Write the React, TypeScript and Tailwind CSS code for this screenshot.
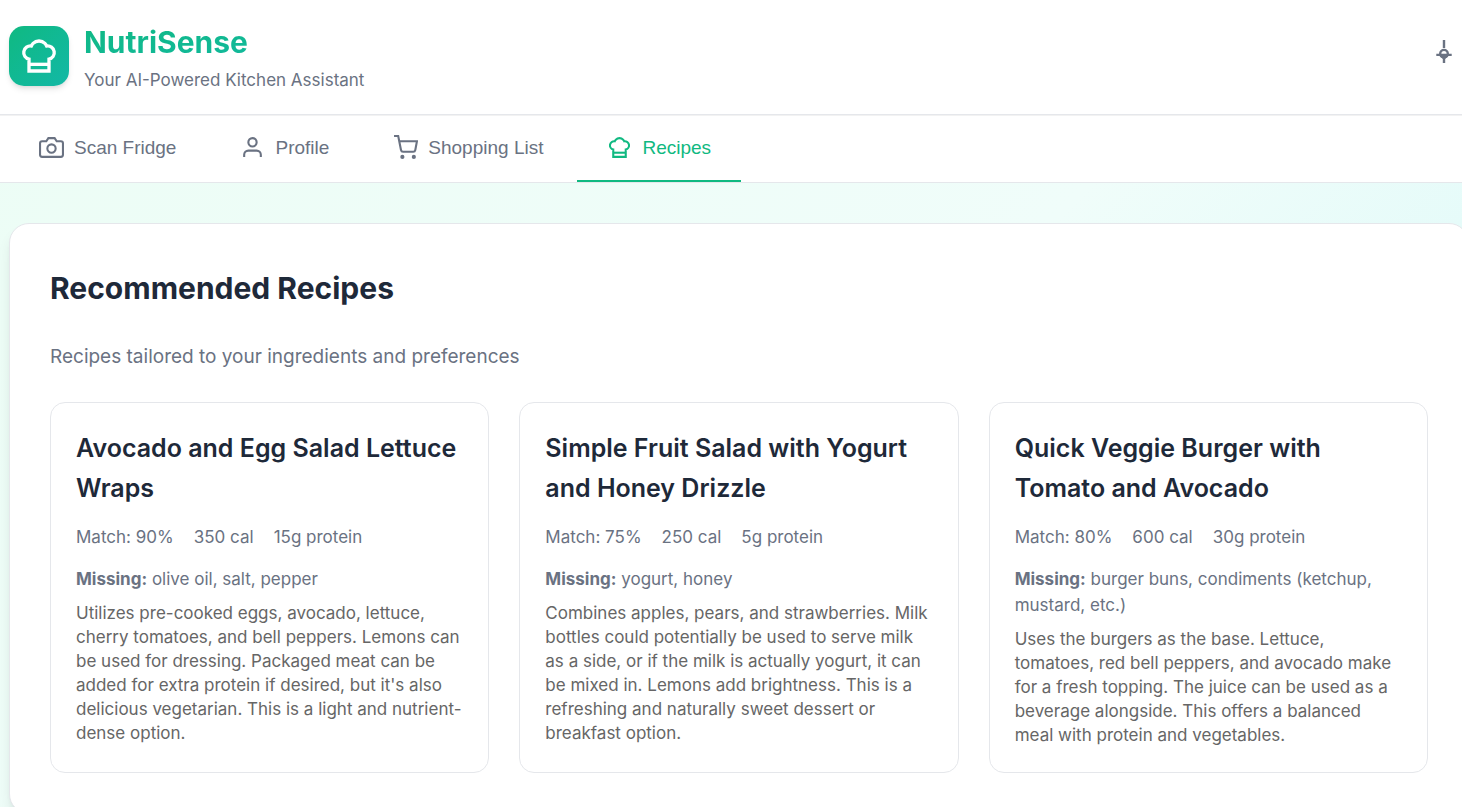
import React, { useState } from 'react';

type IconProps = { className?: string };

const ChefHatIcon = ({ className }: IconProps) => (
  <svg className={className} viewBox="0 0 24 24" fill="none" stroke="currentColor" strokeWidth="2" aria-hidden="true">
    <path d="M6 13.87A4 4 0 0 1 7.41 6a5.11 5.11 0 0 1 1.05-1.54 5 5 0 0 1 7.08 0A5.11 5.11 0 0 1 16.59 6 4 4 0 0 1 18 13.87V21H6Z" />
    <line x1="6" y1="17" x2="18" y2="17" />
  </svg>
);

const CameraIcon = ({ className }: IconProps) => (
  <svg className={className} viewBox="0 0 24 24" fill="none" stroke="currentColor" strokeWidth="2" aria-hidden="true">
    <path d="M23 19a2 2 0 0 1-2 2H3a2 2 0 0 1-2-2V8a2 2 0 0 1 2-2h4l2-3h6l2 3h4a2 2 0 0 1 2 2z" />
    <circle cx="12" cy="13" r="4" />
  </svg>
);

const UserIcon = ({ className }: IconProps) => (
  <svg className={className} viewBox="0 0 24 24" fill="none" stroke="currentColor" strokeWidth="2" aria-hidden="true">
    <path d="M20 21v-2a4 4 0 0 0-4-4H8a4 4 0 0 0-4 4v2" />
    <circle cx="12" cy="7" r="4" />
  </svg>
);

const CartIcon = ({ className }: IconProps) => (
  <svg className={className} viewBox="0 0 24 24" fill="none" stroke="currentColor" strokeWidth="2" aria-hidden="true">
    <circle cx="9" cy="21" r="1" />
    <circle cx="20" cy="21" r="1" />
    <path d="M1 1h4l2.68 13.39a2 2 0 0 0 2 1.61h9.72a2 2 0 0 0 2-1.61L23 6H6" />
  </svg>
);

const SettingsIcon = ({ className }: IconProps) => (
  <svg className={className} viewBox="0 0 24 24" fill="none" stroke="currentColor" strokeWidth="2.4" aria-hidden="true">
    <path d="M12 0v8M12 17v6M4.300 14.900h15.400" />
    <circle cx="12" cy="13.7" r="3.8" />
    <path d="M7 15h10l-4 4h-2z" fill="currentColor" stroke="none" />
  </svg>
);

const tabs = [
  { id: 'scan', label: 'Scan Fridge', icon: CameraIcon },
  { id: 'profile', label: 'Profile', icon: UserIcon },
  { id: 'shopping', label: 'Shopping List', icon: CartIcon },
  { id: 'recipes', label: 'Recipes', icon: ChefHatIcon },
];

const recipes = [
  {
    title: 'Avocado and Egg Salad Lettuce Wraps',
    match: 90,
    calories: 350,
    protein: 15,
    missing: ['olive oil', 'salt', 'pepper'],
    description:
      "Utilizes pre-cooked eggs, avocado, lettuce, cherry tomatoes, and bell peppers. Lemons can be used for dressing. Packaged meat can be added for extra protein if desired, but it's also delicious vegetarian. This is a light and nutrient-dense option.",
  },
  {
    title: 'Simple Fruit Salad with Yogurt and Honey Drizzle',
    match: 75,
    calories: 250,
    protein: 5,
    missing: ['yogurt', 'honey'],
    description:
      'Combines apples, pears, and strawberries. Milk bottles could potentially be used to serve milk as a side, or if the milk is actually yogurt, it can be mixed in. Lemons add brightness. This is a refreshing and naturally sweet dessert or breakfast option.',
  },
  {
    title: 'Quick Veggie Burger with Tomato and Avocado',
    match: 80,
    calories: 600,
    protein: 30,
    missing: ['burger buns', 'condiments (ketchup, mustard, etc.)'],
    description:
      'Uses the burgers as the base. Lettuce, tomatoes, red bell peppers, and avocado make for a fresh topping. The juice can be used as a beverage alongside. This offers a balanced meal with protein and vegetables.',
  },
];

const RecipeCard: React.FC<{ recipe: (typeof recipes)[number] }> = ({ recipe }) => (
  <article className="rounded-[15px] border border-gray-200 bg-white p-[25px]">
    <h3 className="mb-[15px] text-[25px] leading-[40px] font-semibold text-gray-800">{recipe.title}</h3>
    <div className="mb-[15px] flex gap-5 text-[17px] leading-[28px] text-gray-500">
      <span>Match: {recipe.match}%</span>
      <span>{recipe.calories} cal</span>
      <span>{recipe.protein}g protein</span>
    </div>
    <p className="mb-[9px] text-[17px] leading-[26px] text-gray-500">
      <strong className="font-bold">Missing:</strong> {recipe.missing.join(', ')}
    </p>
    <p className="text-[17px] leading-[24px] text-[#666666]">{recipe.description}</p>
  </article>
);

export default function App() {
  const [active, setActive] = useState('recipes');

  return (
    <div className="min-h-screen overflow-x-hidden bg-linear-135 from-[#ecfdf5] via-[#f0fdfa] via-55% to-[#d6f8f8] font-['Inter',sans-serif]">
      {/* Header */}
      <header className="border-b border-gray-200 bg-white">
        <div className="flex items-center justify-between pt-[18px] pr-[6px] pb-5 pl-[9px]">
          <div className="flex items-center gap-[15px]">
            <div className="flex size-[60px] items-center justify-center rounded-[15px] bg-linear-to-br from-[#10b981] to-[#14b8a6] text-white shadow-md">
              <ChefHatIcon className="size-10" />
            </div>
            <div>
              <h1 className="bg-linear-to-br from-[#10b981] to-[#14b8a6] bg-clip-text text-[30px] leading-[48px] font-bold text-transparent">
                NutriSense
              </h1>
              <p className="text-[17px] leading-[28px] text-gray-500">Your AI-Powered Kitchen Assistant</p>
            </div>
          </div>
          <button type="button" aria-label="Settings" className="pb-2 text-gray-500">
            <SettingsIcon className="size-6" />
          </button>
        </div>
      </header>

      {/* Tabs */}
      <nav className="flex gap-1 border-b border-gray-200 bg-white pl-[9px] font-['Liberation_Sans',sans-serif] inset-shadow-2xs">
        {tabs.map(({ id, label, icon: Icon }) => (
          <button
            key={id}
            type="button"
            onClick={() => setActive(id)}
            className={`flex items-center gap-[10px] border-b-2 px-[30px] py-5 text-[19px] leading-[25px] ${
              active === id ? 'border-[#10b981] text-[#10b981]' : 'border-transparent text-gray-500'
            }`}
          >
            <Icon className="size-[25px]" />
            {label}
          </button>
        ))}
      </nav>

      {/* Recipes */}
      <main className="-mr-[7px] py-10 pl-[9px]">
        <section className="rounded-[20px] border border-gray-200 bg-white p-10 shadow-lg">
          <h2 className="mb-[30px] text-[30px] leading-[48px] font-bold text-gray-800">Recommended Recipes</h2>
          <p className="mb-[30px] text-[19px] leading-[30px] text-gray-500">
            Recipes tailored to your ingredients and preferences
          </p>
          <div className="grid grid-cols-3 gap-[30px]">
            {recipes.map((recipe) => (
              <RecipeCard key={recipe.title} recipe={recipe} />
            ))}
          </div>
        </section>
      </main>
    </div>
  );
}
